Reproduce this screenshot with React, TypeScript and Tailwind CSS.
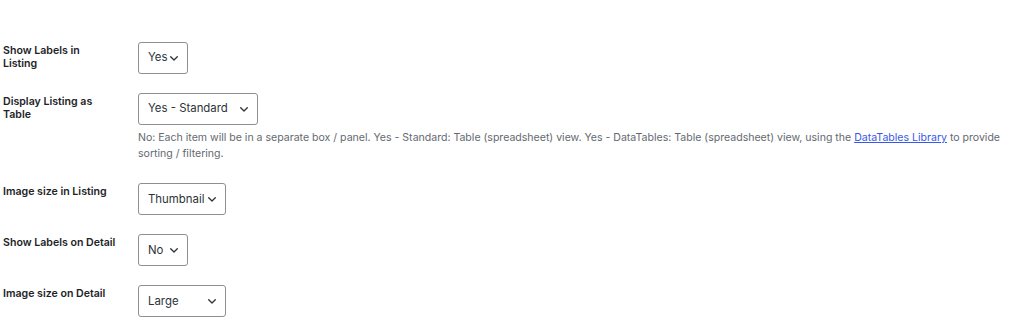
import React from "react";

const Chevron = () => (
  <svg width="8" height="5" viewBox="0 0 8 5" fill="none" className="shrink-0">
    <path d="M0.7 0.7 L4 4 L7.3 0.7" stroke="#2c3338" strokeWidth="1.3" strokeLinecap="round" strokeLinejoin="round" />
  </svg>
);

const Select = ({ value, width }: { value: string; width: string }) => (
  <div
    className={`flex h-[32px] items-center justify-between rounded-[3px] border border-[#8c8f94] bg-white pl-[9px] pr-[9px] text-[11.4px] text-[#2c3338] ${width}`}
  >
    <span className="whitespace-nowrap">{value}</span>
    <Chevron />
  </div>
);

const Row = ({ label, children }: { label: string[]; children: React.ReactNode }) => (
  <div className="flex items-start">
    <div className="w-[138px] shrink-0 pl-[3px] pt-[2px]">
      <div className="text-[10.6px] font-semibold leading-[13px] text-[#1d2327]">
        {label.map((l, i) => (
          <div key={i} className="whitespace-nowrap">{l}</div>
        ))}
      </div>
    </div>
    <div className="min-w-0 flex-1">{children}</div>
  </div>
);

export default function App() {
  return (
    <div
      className="h-[329px] w-[1024px] overflow-hidden bg-white pt-[42px]"
      style={{ fontFamily: "Inter, 'Noto Sans', 'Liberation Sans', sans-serif" }}
    >
      <div className="flex flex-col gap-[19px]">
        <Row label={["Show Labels in", "Listing"]}>
          <Select value="Yes" width="w-[50px]" />
        </Row>
        <Row label={["Display Listing as", "Table"]}>
          <Select value="Yes - Standard" width="w-[120px]" />
          <p className="mt-[5px] mb-[3px] pr-[10px] text-[10.55px] leading-[15.6px] text-[#646970]">
            <span className="whitespace-nowrap">
              No: Each item will be in a separate box / panel. Yes - Standard: Table (spreadsheet) view. Yes - DataTables: Table (spreadsheet) view, using the{" "}
              <a href="#" className="text-[#3858e9] underline">DataTables Library</a> to provide
            </span>
            <br />
            sorting / filtering.
          </p>
        </Row>
        <Row label={["Image size in Listing"]}>
          <Select value="Thumbnail" width="w-[88px]" />
        </Row>
        <Row label={["Show Labels on Detail"]}>
          <Select value="No" width="w-[50px]" />
        </Row>
        <Row label={["Image size on Detail"]}>
          <Select value="Large" width="w-[88px]" />
        </Row>
      </div>
    </div>
  );
}
